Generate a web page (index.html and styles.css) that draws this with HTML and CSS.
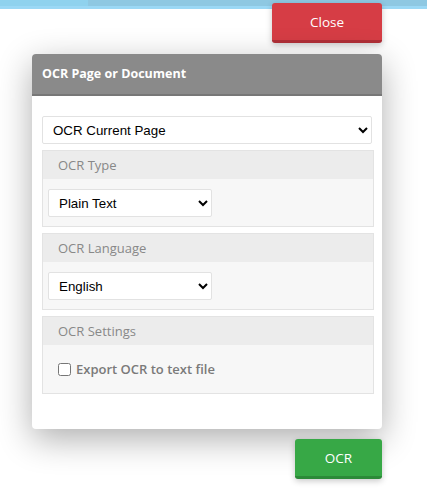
FILE: index.html
```html
<!DOCTYPE html>
<html lang="en">
<head>
  <meta charset="UTF-8">
  <meta name="viewport" content="width=device-width, initial-scale=1.0">
  <title>OCR</title>
  <link rel="stylesheet" href="styles.css">
</head>
<body>
  <div class="dialog-wrap">
    <button class="btn btn-close" type="button">Close</button>

    <div class="modal">
      <div class="modal-header">OCR Page or Document</div>
      <div class="modal-body">
        <select class="field field-wide">
          <option>OCR Current Page</option>
          <option>OCR Entire Document</option>
        </select>

        <div class="panel">
          <div class="panel-title">OCR Type</div>
          <div class="panel-body">
            <select class="field field-small">
              <option>Plain Text</option>
              <option>Searchable PDF</option>
            </select>
          </div>
        </div>

        <div class="panel">
          <div class="panel-title">OCR Language</div>
          <div class="panel-body">
            <select class="field field-small">
              <option>English</option>
              <option>German</option>
              <option>French</option>
            </select>
          </div>
        </div>

        <div class="panel">
          <div class="panel-title">OCR Settings</div>
          <div class="panel-body panel-check">
            <label class="check"><input type="checkbox"> Export OCR to text file</label>
          </div>
        </div>
      </div>
    </div>

    <button class="btn btn-ocr" type="button">OCR</button>
  </div>
</body>
</html>
```

FILE: styles.css
```css
:root {
  --strip: #8fd2ee;
  --strip-dark: #8ec8e2;
  --red: #d63d45;
  --red-dark: #b02f37;
  --green: #37a846;
  --green-dark: #2c8a38;
  --head: #8a8a8a;
  --panel-head: #ececec;
  --panel-bg: #f7f7f7;
  --panel-line: #e3e3e3;
}

html, body {
  margin: 0;
  padding: 0;
}

body {
  font-family: 'Open Sans', 'Noto Sans', sans-serif;
  background-color: #fff;
  background-image:
    linear-gradient(#9bd8f5, #9bd8f5),
    linear-gradient(var(--strip-dark), var(--strip-dark)),
    linear-gradient(var(--strip), var(--strip));
  background-size: 100% 3px, calc(100% - 88px) 6px, 100% 6px;
  background-position: 0 6px, 88px 0, 0 0;
  background-repeat: no-repeat;
  min-height: 493px;
}

.dialog-wrap {
  width: 350px;
  margin-left: 32px;
  padding-top: 3px;
  display: flex;
  flex-direction: column;
}

.btn {
  font-family: 'Open Sans', 'Noto Sans', sans-serif;
  font-size: 13.5px;
  color: #fff;
  border: none;
  border-radius: 3px;
  height: 40px;
  padding: 0;
  align-self: flex-end;
  box-shadow: 0 2px 6px rgba(0, 0, 0, 0.22);
  cursor: pointer;
}

.btn-close {
  width: 110px;
  background: var(--red);
  border-bottom: 3px solid var(--red-dark);
}

.btn-ocr {
  width: 87px;
  margin-top: 10px;
  background: var(--green);
  border-bottom: 3px solid var(--green-dark);
}

.modal {
  margin-top: 11px;
  height: 375px;
  background: #fff;
  border-radius: 4px;
  box-shadow: 0 10px 34px rgba(0, 0, 0, 0.32);
}

.modal-header {
  height: 40px;
  line-height: 40px;
  padding-left: 10px;
  background: var(--head);
  border-bottom: 2px solid #777;
  border-radius: 4px 4px 0 0;
  color: #fff;
  font-weight: bold;
  font-size: 12.5px;
}

.modal-body {
  padding: 20px 8px 0 10px;
  display: flex;
  flex-direction: column;
  gap: 6px;
}

.field {
  font-family: 'Liberation Sans', Arial, sans-serif;
  font-size: 13.33px;
  color: #000;
  height: 28px;
  padding: 0 6px;
  background: #fff;
  border: 1px solid #e2e2e2;
  border-radius: 2px;
}

.field-wide {
  width: calc(100% - 2px);
}

.field-small {
  width: 164px;
}

.panel {
  border: 1px solid var(--panel-line);
  background: var(--panel-bg);
}

.panel-title {
  height: 28px;
  line-height: 28px;
  padding-left: 15px;
  background: var(--panel-head);
  color: #888;
  font-size: 13px;
}

.panel-body {
  padding: 10px 5px 9px;
}

.panel-check {
  height: 48px;
  box-sizing: border-box;
  padding: 0 15px;
  display: flex;
  align-items: center;
}

.check {
  display: flex;
  align-items: center;
  gap: 5px;
  color: #7a7a7a;
  font-size: 13px;
  font-weight: 600;
}

.check input {
  width: 13px;
  height: 13px;
  margin: 0;
}
```
